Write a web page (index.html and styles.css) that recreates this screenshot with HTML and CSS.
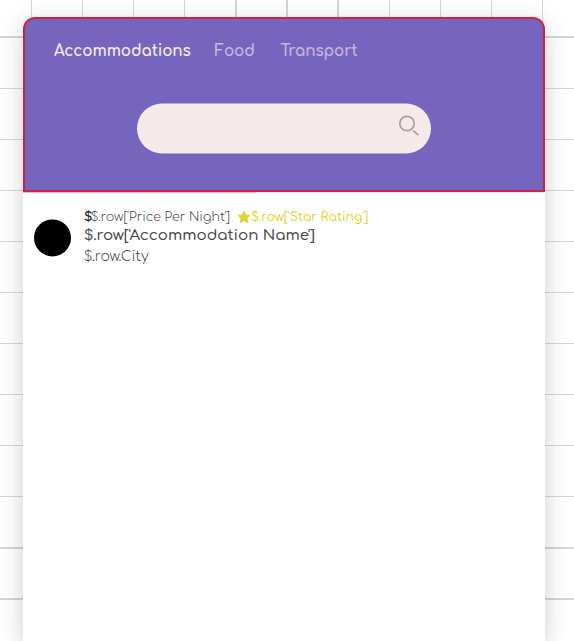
FILE: index.html
```html
<!DOCTYPE html>
<html lang="en">
<head>
<meta charset="utf-8">
<title>Accommodations</title>
<link rel="stylesheet" href="styles.css">
</head>
<body>
<svg class="grid-lines" viewBox="0 0 574 641" aria-hidden="true">
  <path d="M31.5 0V641M82.5 0V641M133.5 0V641M184.5 0V641M389.5 0V641M440.5 0V641M491.5 0V641M542.5 0V641M0 88.5H574M0 139.5H574M0 190.5H574M0 241.5H574M0 292.5H574M0 343.5H574M0 394.5H574M0 445.5H574M0 496.5H574"/>
  <path class="thick" d="M236 0V641M287 0V641M338 0V641M0 37H574M0 548H574M0 599H574"/>
</svg>
<main class="card">
  <header class="header">
    <nav class="tabs">
      <a class="tab active">Accommodations</a>
      <a class="tab food">Food</a>
      <a class="tab transport">Transport</a>
    </nav>
    <div class="search">
      <svg class="search-icon" viewBox="0 0 22 22"><circle cx="9" cy="9" r="7.2"/><path d="M15.2 16.2L20.5 20.6"/></svg>
    </div>
  </header>
  <div class="divider"></div>
  <section class="row">
    <div class="avatar"></div>
    <div class="details">
      <div class="meta"><b class="currency">$</b><span class="price">$.row['Price Per Night']</span><svg class="star" viewBox="0 0 14 14"><path d="M7 1.2L8.8 5L12.9 5.5L9.9 8.4L10.7 12.6L7 10.5L3.3 12.6L4.1 8.4L1.1 5.5L5.2 5Z"/></svg><span class="rating">$.row['Star Rating']</span></div>
      <div class="name">$.row['Accommodation Name']</div>
      <div class="city">$.row.City</div>
    </div>
  </section>
</main>
</body>
</html>
```
FILE: styles.css
```css
* { box-sizing: border-box; }
body {
  margin: 0;
  height: 641px;
  overflow: hidden;
  background: #fff;
  font-family: Comfortaa, Quicksand, Lato, sans-serif;
  white-space: nowrap;
}
.grid-lines {
  position: absolute;
  inset: 0;
  width: 574px;
  height: 641px;
  fill: none;
  stroke: #d6d6d6;
  stroke-width: 1;
}
.grid-lines .thick { stroke-width: 2; }
.card {
  position: relative;
  width: 522px;
  height: 624px;
  margin: 17px 0 0 23px;
  background: #fff;
  border-radius: 12px 12px 0 0;
  box-shadow: 0 5px 25px rgba(0, 0, 0, .18), 0 20px 25px rgba(0, 0, 0, .02);
}
.header {
  height: 175px;
  padding: 21px 0 0 29px;
  background: #7665be;
  border: 2px solid #d3213f;
  border-radius: 12px 12px 0 0;
}
.tabs { display: flex; height: 24px; line-height: 24px; }
.tab { font-size: 15.2px; font-weight: 700; letter-spacing: -.1px; color: #c6b5dc; }
.tab.active { width: 160.5px; color: #f5e9e9; }
.food { width: 66px; }
.search {
  display: flex;
  justify-content: flex-end;
  width: 294px;
  height: 50px;
  margin: 39px 0 0 83px;
  padding: 11px 11px 0 0;
  border-radius: 25px;
  background: #f5e9e9;
  transform: translateY(.5px);
}
.search-icon {
  width: 22px;
  height: 22px;
  fill: none;
  stroke: #a99f9f;
  stroke-width: 1.7;
}
.divider {
  height: 1px;
  background: linear-gradient(90deg, #edb9c4 233px, #eeeeef 233px);
}
.row { display: flex; padding: 14px 0 0 11px; color: #444; }
.avatar { width: 37px; height: 37px; margin-top: 12px; border-radius: 50%; background: #000; transform: translateY(.4px); }
.details { margin-left: 13px; }
.meta { display: flex; height: 20px; line-height: 20px; font-size: 12.64px; }
.currency { width: 7px; color: #222; font-size: 13px; }
.price { width: 146px; font-weight: 300; }
.star { width: 14px; height: 14px; margin-top: 3px; fill: #ded52d; stroke: #ded52d; stroke-linejoin: round; }
.rating { color: #ded52d; font-size: 12.45px; font-weight: 500; }
.name { height: 18px; line-height: 18px; font-size: 15.08px; font-weight: 500; }
.city { height: 24px; line-height: 24px; font-size: 14px; font-weight: 300; }
```
